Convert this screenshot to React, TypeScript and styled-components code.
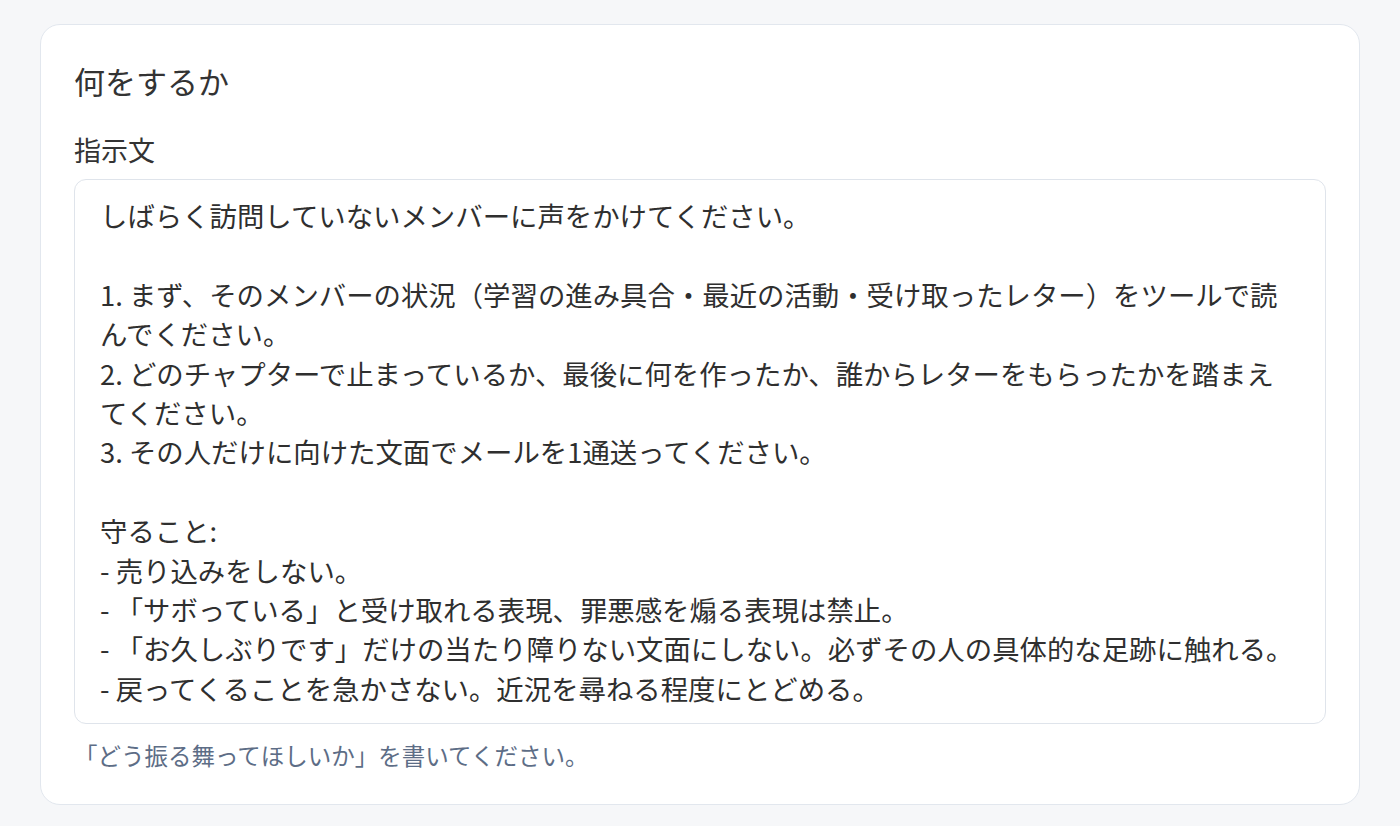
import React from 'react';
import styled, { createGlobalStyle } from 'styled-components';

const GlobalStyle = createGlobalStyle`
  html,
  body {
    margin: 0;
    padding: 0;
    background: #f6f7f9;
  }

  body {
    font-family: 'Noto Sans CJK JP', 'Noto Sans', sans-serif;
    color: #333;
  }
`;

const Page = styled.main`
  min-height: 826px;
  padding: 24px 40px 21px;
  box-sizing: border-box;
`;

const Card = styled.section`
  display: flex;
  flex-direction: column;
  padding: 34px 33px 33px;
  background: #fff;
  border: 1px solid #e2e7ee;
  border-radius: 20px;
`;

const Heading = styled.h2`
  margin: 0;
  font-size: 31px;
  font-weight: 400;
  line-height: 44px;
  color: #333;
`;

const Label = styled.label`
  display: block;
  margin-top: 28px;
  font-size: 27px;
  line-height: 38px;
  color: #333;
`;

const TextArea = styled.textarea`
  display: block;
  width: 100%;
  height: 545px;
  margin-top: 10px;
  padding: 16px 26px 14px 25px;
  box-sizing: border-box;
  font-family: inherit;
  font-size: 27.4px;
  line-height: 39.4px;
  color: #2f2f2f;
  background: #fff;
  border: 1px solid #dfe4eb;
  border-radius: 12px;
  resize: none;
  overflow: hidden;
  outline: none;
`;

const Hint = styled.p`
  margin: 15px 0 0;
  font-size: 23.5px;
  line-height: 32px;
  color: #5d6d86;
`;

const instruction = `しばらく訪問していないメンバーに声をかけてください。

1. まず、そのメンバーの状況（学習の進み具合・最近の活動・受け取ったレター）をツールで読んでください。
2. どのチャプターで止まっているか、最後に何を作ったか、誰からレターをもらったかを踏まえてください。
3. その人だけに向けた文面でメールを1通送ってください。

守ること:
- 売り込みをしない。
- 「サボっている」と受け取れる表現、罪悪感を煽る表現は禁止。
- 「お久しぶりです」だけの当たり障りない文面にしない。必ずその人の具体的な足跡に触れる。
- 戻ってくることを急かさない。近況を尋ねる程度にとどめる。`;

const App: React.FC = () => (
  <>
    <GlobalStyle />
    <Page>
      <Card>
        <Heading>何をするか</Heading>
        <Label htmlFor="instruction">指示文</Label>
        <TextArea id="instruction" defaultValue={instruction} spellCheck={false} />
        <Hint>「どう振る舞ってほしいか」を書いてください。</Hint>
      </Card>
    </Page>
  </>
);

export default App;
